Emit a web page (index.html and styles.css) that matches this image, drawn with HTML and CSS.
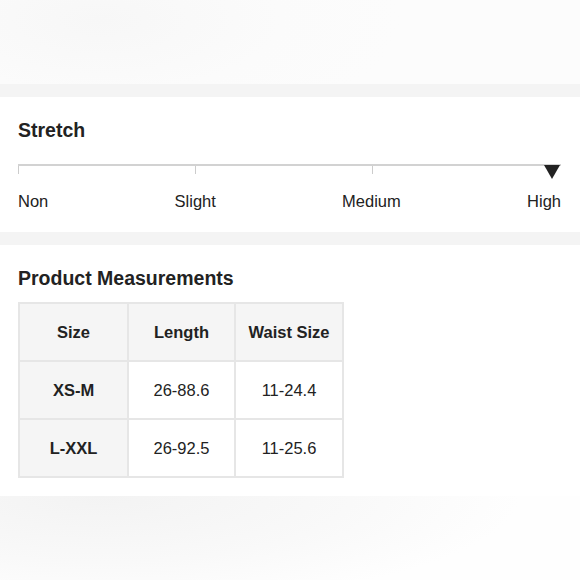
FILE: index.html
```html
<!DOCTYPE html>
<html>
<head>
<meta charset="utf-8">
<link rel="stylesheet" href="styles.css">
</head>
<body>
<div class="fade fade-top"></div>
<div class="band"></div>
<section class="card stretch">
  <h2 class="title">Stretch</h2>
  <div class="track">
    <span class="tick tick-1"></span>
    <span class="tick tick-2"></span>
    <span class="tick tick-3"></span>
    <span class="marker"></span>
  </div>
  <div class="labels">
    <span>Non</span>
    <span>Slight</span>
    <span>Medium</span>
    <span>High</span>
  </div>
</section>
<div class="band"></div>
<section class="card measure">
  <h2 class="title">Product Measurements</h2>
  <table class="sizes">
    <tr><th class="c1">Size</th><th class="c2">Length</th><th class="c3">Waist Size</th></tr>
    <tr><th>XS-M</th><td>26-88.6</td><td>11-24.4</td></tr>
    <tr><th>L-XXL</th><td>26-92.5</td><td>11-25.6</td></tr>
  </table>
</section>
<div class="fade fade-bottom"></div>
</body>
</html>
```
FILE: styles.css
```css
html, body {
  margin: 0;
  padding: 0;
  background: #ffffff;
  font-family: "Liberation Sans", Arial, sans-serif;
  color: #222222;
}
.fade {
  height: 84px;
}
.fade-top {
  background: radial-gradient(ellipse 300px 120px at 100px 20px, #f7f7f7, #fbfbfb 60%, #fcfcfc);
}
.fade-bottom {
  height: 84px;
  background: radial-gradient(ellipse 420px 110px at 100px 0px, #f3f3f3, #f9f9f9 60%, #fefefe 100%);
}
.band {
  height: 13px;
  background: #f4f4f4;
}
.card {
  box-sizing: border-box;
  padding: 22px 19px 0 18px;
  background: #ffffff;
}
.stretch {
  height: 135px;
}
.measure {
  height: 251px;
}
.title {
  margin: 0;
  font-size: 19.5px;
  line-height: 23px;
  font-weight: bold;
  color: #222222;
}
.track {
  position: relative;
  margin-top: 22px;
  height: 14px;
  border-top: 2px solid #d2d2d2;
}
.tick {
  position: absolute;
  top: 0;
  width: 1px;
  height: 8px;
  background: #cccccc;
}
.tick-1 { left: 0; }
.tick-2 { left: 177px; }
.tick-3 { left: 354px; }
.marker {
  position: absolute;
  top: -1px;
  right: 1px;
  width: 0;
  height: 0;
  border-left: 8.5px solid transparent;
  border-right: 8.5px solid transparent;
  border-top: 14px solid #222222;
}
.labels {
  display: flex;
  justify-content: space-between;
  margin-top: 11px;
  font-size: 16.5px;
  line-height: 20px;
  color: #222222;
}
.sizes {
  margin-top: 12px;
  border-collapse: collapse;
  font-size: 16.5px;
  color: #222222;
}
.sizes th, .sizes td {
  border: 2px solid #e6e6e6;
  height: 56px;
  padding: 0;
  text-align: center;
}
.sizes th {
  background: #f5f5f5;
  font-weight: bold;
}
.sizes td {
  background: #ffffff;
  font-weight: normal;
}
.c1 { width: 107px; }
.c2 { width: 105px; }
.c3 { width: 106px; }
```
